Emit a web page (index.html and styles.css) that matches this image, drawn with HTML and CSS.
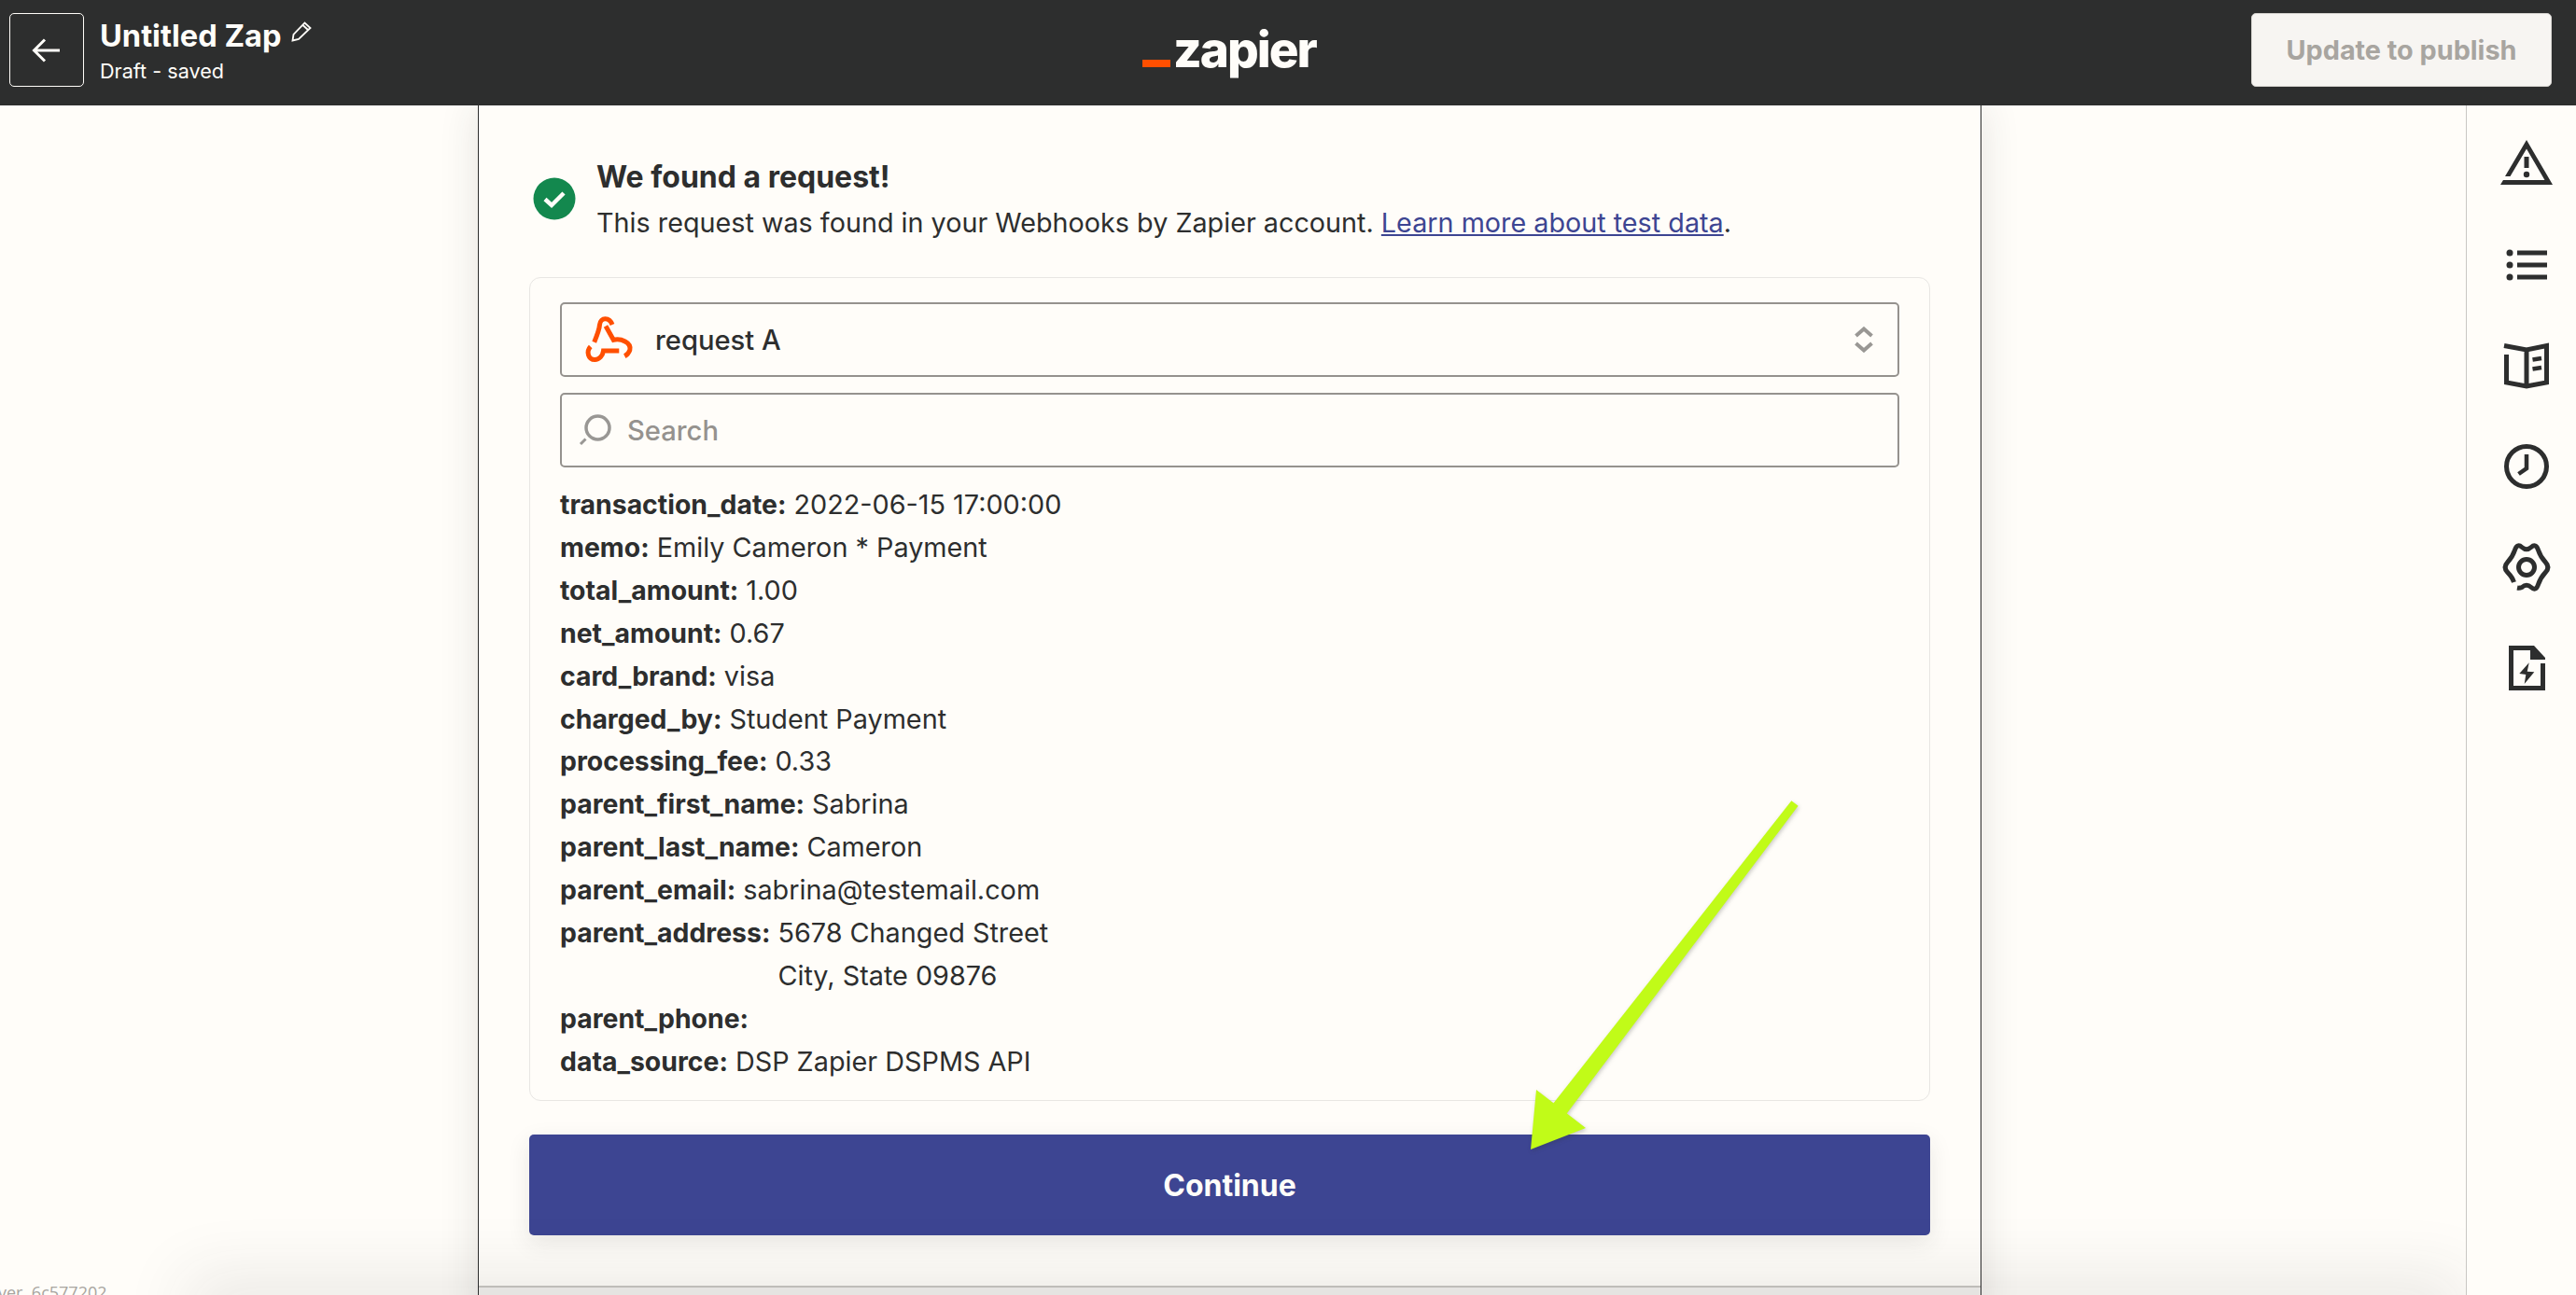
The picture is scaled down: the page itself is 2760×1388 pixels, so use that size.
FILE: index.html
```html
<!DOCTYPE html>
<html lang="en">
  <head>
    <meta charset="UTF-8" />
    <title>Untitled Zap</title>
    <link rel="stylesheet" href="styles.css">
  </head>
  <body>
    <header class="topbar">
      <div class="topbar_left">
        <button class="back_btn" type="button">
          <svg width="32" height="28" viewBox="0 0 32 28" fill="none" stroke="#fffdf9" stroke-width="3">
            <path d="M30 14H3M14 2.500L2.500 14L14 25.500"/>
          </svg>
        </button>
        <div class="zap_name">
          <div class="zap_title">
            <span>Untitled Zap</span>
            <svg width="22" height="22" viewBox="0 0 22 22" fill="none" stroke="#fffdf9" stroke-width="1.800">
              <path d="M1.500 20.500L2.500 14L14.500 1.500L20.500 7L8 19ZM12.500 4L18 9"/>
            </svg>
          </div>
          <div class="zap_status">Draft - saved</div>
        </div>
      </div>
      <div class="logo"><span class="logo_bar"></span><span class="logo_text">zapier</span></div>
      <button class="publish_btn" type="button">Update to publish</button>
    </header>

    <div class="main">
      <div class="canvas">
        <section class="panel">
          <div class="panel_body">
            <div class="found">
              <svg class="found_icon" width="46" height="46" viewBox="0 0 46 46">
                <circle cx="23" cy="23" r="22.500" fill="#13884e"/>
                <path d="M13 23.500L20 30L33 17" fill="none" stroke="#fffdf9" stroke-width="4.500"/>
              </svg>
              <div>
                <h2>We found a request!</h2>
                <p>This request was found in your Webhooks by Zapier account. <a href="#">Learn more about test data</a>.</p>
              </div>
            </div>

            <div class="data_card">
              <div class="field select_field">
                <svg width="64" height="56" viewBox="0 0 64 56" fill="none" stroke="#ff4f00" stroke-width="5">
                  <path d="M36 12C33 4 23.500 3.500 22.500 12C22.300 15.500 21.500 19 16.700 30.700"/>
                  <path d="M29 13.500L37.300 28.300C45 26.300 57 31 54.800 39.300C53.800 42.300 51.700 44.500 49.300 45.800"/>
                  <path d="M12.700 35.500C7.800 40.700 10.200 49.500 17.300 49.500C22.300 49.500 25.800 45 26.500 40H43.300"/>
                </svg>
                <span class="select_text">request A</span>
                <svg class="chevrons" width="20" height="28" viewBox="0 0 20 28" fill="none" stroke="#999794" stroke-width="4">
                  <path d="M1.500 10L10 2.500L18.500 10M1.500 18L10 25.500L18.500 18"/>
                </svg>
              </div>
              <div class="field search_field">
                <svg width="36" height="36" viewBox="0 0 36 36" fill="none" stroke="#999794">
                  <circle cx="20.500" cy="15.500" r="12.500" stroke-width="3.500"/>
                  <path d="M2 33L7.500 27.500" stroke-width="3"/>
                </svg>
                <span class="search_text">Search</span>
              </div>
              <div class="rows">
                <div class="row"><b>transaction_date:</b><span>2022-06-15 17:00:00</span></div>
                <div class="row"><b>memo:</b><span>Emily Cameron * Payment</span></div>
                <div class="row"><b>total_amount:</b><span>1.00</span></div>
                <div class="row"><b>net_amount:</b><span>0.67</span></div>
                <div class="row"><b>card_brand:</b><span>visa</span></div>
                <div class="row"><b>charged_by:</b><span>Student Payment</span></div>
                <div class="row"><b>processing_fee:</b><span>0.33</span></div>
                <div class="row"><b>parent_first_name:</b><span>Sabrina</span></div>
                <div class="row"><b>parent_last_name:</b><span>Cameron</span></div>
                <div class="row"><b>parent_email:</b><span>sabrina@testemail.com</span></div>
                <div class="row"><b>parent_address:</b><span>5678 Changed Street<br>City, State 09876</span></div>
                <div class="row"><b>parent_phone:</b><span></span></div>
                <div class="row"><b>data_source:</b><span>DSP Zapier DSPMS API</span></div>
              </div>
            </div>

            <button class="continue_btn" type="button">Continue</button>
          </div>
          <div class="panel_foot"></div>
        </section>
        <div class="bottom_shade"></div>
        <div class="version">ver. 6c577202</div>
      </div>

      <aside class="rail">
        <svg width="56" height="56" viewBox="0 0 56 56" fill="#2d2e2e">
          <path d="M28 2L56 50H0L3 45H47.500L28 11.500L10.500 41L5 41Z"/>
          <rect x="25.500" y="20" width="5" height="12"/>
          <circle cx="28" cy="39" r="3.200"/>
        </svg>
        <svg width="56" height="56" viewBox="0 0 56 56" fill="#2d2e2e">
          <circle cx="10" cy="15" r="3.500"/>
          <circle cx="10" cy="28" r="3.500"/>
          <circle cx="10" cy="41" r="3.500"/>
          <rect x="18" y="12.500" width="32" height="5"/>
          <rect x="18" y="25.500" width="32" height="5"/>
          <rect x="18" y="38.500" width="32" height="5"/>
        </svg>
        <svg width="56" height="56" viewBox="0 0 56 56" fill="none" stroke="#2d2e2e" stroke-width="5">
          <path d="M4 6.500L28 11L49.500 6.500V46L28 50L6.500 46V16M28 11V50"/>
          <path d="M34.500 21.500L44 20M34.500 31.500L44 30" stroke-width="4.500"/>
        </svg>
        <svg width="56" height="56" viewBox="0 0 56 56" fill="none" stroke="#2d2e2e" stroke-width="5">
          <circle cx="28" cy="28" r="21.500"/>
          <path d="M28 15V30L19.500 36" stroke-width="4.500"/>
        </svg>
        <svg width="56" height="56" viewBox="0 0 56 56" fill="none" stroke="#2d2e2e" stroke-width="5">
          <path d="M18 50Q20.500 50.500 23 49.500Q28 45 33 49.500Q38 54 40.500 46.500Q43 39 48.250 33.500Q53.500 28 48.250 22.500Q43 17 40.500 9.500Q38 2 33 6.500Q28 11 23 6.500Q18 2 15.500 9.500Q13 17 7.750 22.500Q2.500 28 7.750 33.500Q13 39 14.500 44"/>
          <circle cx="28" cy="28" r="8.500"/>
        </svg>
        <svg width="56" height="56" viewBox="0 0 56 56" fill="#2d2e2e">
          <path d="M45.500 23V49.500H11.500V6.500H33" fill="none" stroke="#2d2e2e" stroke-width="5"/>
          <path d="M32 4H36L48 17V19H32Z"/>
          <path d="M30.700 22.300L20.300 34L27.300 35L25.700 45L36.300 32.300L28.700 31.700Z"/>
        </svg>
      </aside>
    </div>

    <svg class="arrow" width="310" height="400" viewBox="0 0 310 400" fill="#c1fb18">
      <path d="M296.600 13.700L289.400 8.300L32.800 334.600L47.200 345.400Z"/>
      <path d="M10 382L16 318L69 359Z"/>
    </svg>
  </body>
</html>
```

FILE: styles.css
```css
* {
  box-sizing: border-box;
}

html,
body {
  height: 100%;
}

body {
  margin: 0;
  display: flex;
  flex-direction: column;
  overflow: hidden;
  background-color: #fffdf9;
  color: #2d2e2e;
  font-family: Inter, "Noto Sans", sans-serif;
}

.topbar {
  position: relative;
  flex: none;
  display: flex;
  align-items: center;
  justify-content: space-between;
  height: 113px;
  padding: 0 26px 6px 10px;
  background-color: #2d2e2e;
  color: #fffdf9;
}

.topbar_left {
  display: flex;
  align-items: center;
  gap: 17px;
}

.back_btn {
  display: flex;
  align-items: center;
  justify-content: center;
  width: 80px;
  height: 79px;
  padding: 0;
  background: none;
  border: 1px solid #fffdf9;
  border-radius: 5px;
}

.zap_title {
  display: flex;
  align-items: center;
  gap: 11px;
  font-size: 32.600px;
  font-weight: 700;
  line-height: 40px;
}

.zap_title svg {
  margin-bottom: 8px;
}

.zap_status {
  margin-top: 4px;
  font-size: 21.600px;
  line-height: 28px;
}

.logo {
  position: absolute;
  left: 1224px;
  top: 19px;
  display: flex;
  align-items: flex-end;
}

.logo_bar {
  width: 30px;
  height: 8px;
  margin: 0 3px 15px 0;
  background-color: #ff4f00;
}

.logo_text {
  font-size: 53px;
  font-weight: 800;
  line-height: 68px;
  letter-spacing: -2px;
}

.publish_btn {
  width: 322px;
  height: 79px;
  padding: 0;
  background-color: #f7f5f2;
  border: 1px solid #d6d4d0;
  border-radius: 5px;
  color: #a8a5a0;
  font-family: inherit;
  font-size: 28.800px;
  font-weight: 700;
}

.main {
  flex: 1;
  min-height: 0;
  display: flex;
}

.canvas {
  position: relative;
  flex: 1;
  min-width: 0;
  overflow: hidden;
  padding-left: 512px;
}

.panel {
  width: 1611px;
  background-color: #fffdf9;
  border-left: 1px solid #2d2e2e;
  border-right: 1px solid #2d2e2e;
  box-shadow: 0 0 40px rgba(45, 46, 46, 0.12);
}

.panel_body {
  padding: 54px 54px 54px;
}

.panel_foot {
  height: 40px;
  background-color: #f2f0ed;
  border-top: 2px solid #c9c7c3;
}

.found {
  display: flex;
  align-items: center;
  gap: 22px;
  padding-left: 4px;
}

.found_icon {
  margin-bottom: 3px;
}

.found h2 {
  margin: 0;
  font-size: 32px;
  font-weight: 700;
  line-height: 46px;
}

.found p {
  margin: 3px 0 0;
  font-size: 28.750px;
  line-height: 46px;
}

.found a {
  color: #3d4592;
}

.data_card {
  margin-top: 35px;
  padding: 26px 32px 18px;
  border: 1px solid #e8e6e3;
  border-radius: 12px;
}

.field {
  display: flex;
  align-items: center;
  height: 80px;
  border: 2px solid #95928e;
  border-radius: 5px;
  font-size: 29.200px;
}

.select_field {
  padding: 0 26px 0 18px;
  gap: 18px;
}

.select_text {
  flex: 1;
  font-weight: 500;
}

.search_field {
  margin-top: 17px;
  padding: 0 18px;
  gap: 16px;
}

.search_text {
  color: #95928e;
  font-weight: 500;
}

.rows {
  height: 643px;
  margin-top: 17px;
  font-size: 28.800px;
  line-height: 45.900px;
}

.row {
  display: flex;
  gap: 8px;
}

.row b {
  font-size: 28.400px;
  font-weight: 700;
}

.continue_btn {
  display: block;
  width: 100%;
  height: 108px;
  margin-top: 36px;
  padding: 0;
  background-color: #3d4592;
  border: none;
  border-radius: 5px;
  box-shadow: 0 8px 24px rgba(45, 46, 46, 0.1);
  color: #fffdf9;
  font-family: inherit;
  font-size: 32px;
  font-weight: 700;
}

.bottom_shade {
  position: absolute;
  left: 220px;
  right: 20px;
  bottom: -30px;
  height: 30px;
  box-shadow: 0 0 70px 20px rgba(45, 46, 46, 0.1);
  pointer-events: none;
}

.version {
  position: absolute;
  left: -2px;
  bottom: -9px;
  color: #a8a5a0;
  font-family: "Open Sans", sans-serif;
  font-size: 18px;
  line-height: 24px;
}

.rail {
  flex: none;
  display: flex;
  flex-direction: column;
  gap: 52px;
  width: 118px;
  padding: 35px 0 0 36px;
  border-left: 1px solid #c9c7c3;
}

.arrow {
  position: absolute;
  left: 1630px;
  top: 850px;
  filter: drop-shadow(1px 2px 2px rgba(45, 46, 46, 0.25));
}
```
